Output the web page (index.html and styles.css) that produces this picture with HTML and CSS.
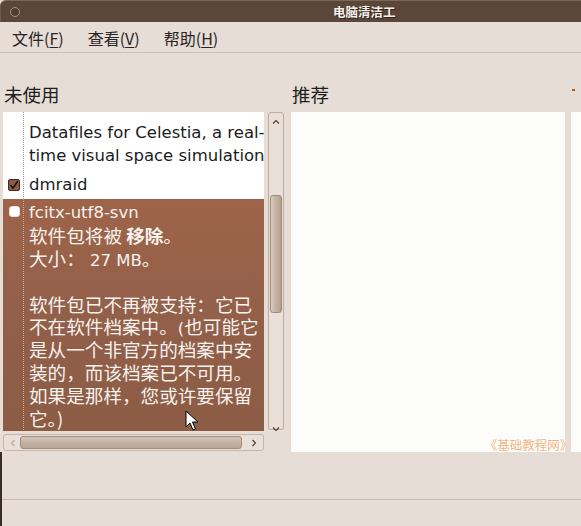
FILE: index.html
```html
<!DOCTYPE html>
<html>
<head>
<meta charset="utf-8">
<link rel="stylesheet" href="styles.css">
</head>
<body>
<div class="window">
  <div class="titlebar">
    <span class="win-btn"></span>
    <span class="title">电脑清洁工</span>
  </div>
  <div class="menubar">
    <span class="menu">文件(<u>F</u>)</span>
    <span class="menu">查看(<u>V</u>)</span>
    <span class="menu">帮助(<u>H</u>)</span>
  </div>
  <div class="main">
    <div class="col col-left">
      <div class="label">未使用</div>
      <div class="listwrap">
        <div class="list">
          <div class="row">
            <span class="cb-slot"></span>
            <div class="row-text">
              <div class="ln">Datafiles for Celestia, a real-</div>
              <div class="ln">time visual space simulation</div>
            </div>
          </div>
          <div class="row">
            <span class="cb-slot"><span class="cb cb-checked"><svg width="10" height="10" viewBox="0 0 10 10"><path d="M1.5 5.2 L4 8 L8.8 1.2" fill="none" stroke="#111" stroke-width="1.6"/></svg></span></span>
            <div class="row-text"><div class="ln">dmraid</div></div>
          </div>
          <div class="row row-selected">
            <span class="cb-slot"><span class="cb cb-empty"></span></span>
            <div class="row-text">
              <div class="ln">fcitx-utf8-svn</div>
              <div class="ln"><span class="cjk">软件包将被 <b>移除</b>。</span></div>
              <div class="ln"><span class="cjk">大小：</span> 27 MB<span class="cjk">。</span></div>
              <div class="ln"></div>
              <div class="ln"><span class="cjk">软件包已不再被支持：它已</span></div>
              <div class="ln"><span class="cjk">不在软件档案中。</span>(<span class="cjk">也可能它</span></div>
              <div class="ln"><span class="cjk">是从一个非官方的档案中安</span></div>
              <div class="ln"><span class="cjk">装的，而该档案已不可用。</span></div>
              <div class="ln"><span class="cjk">如果是那样，您或许要保留</span></div>
              <div class="ln"><span class="cjk">它。)</span></div>
            </div>
          </div>
          <svg class="cursor" width="14" height="22" viewBox="0 0 14 22"><path d="M1 1 L1 17 L5 13 L8 20 L10.5 19 L7.5 12 L13 12 Z" fill="#fff" stroke="#000" stroke-width="1"/></svg>
        </div>
        <div class="vscroll">
          <svg class="arrow" width="8" height="6" viewBox="0 0 8 6"><path d="M1 4.5 L4 1.5 L7 4.5" fill="none" stroke="#4a3a30" stroke-width="1.1"/></svg>
          <div class="vtrack"><div class="vthumb"></div></div>
          <svg class="arrow" width="8" height="6" viewBox="0 0 8 6"><path d="M1 1.5 L4 4.5 L7 1.5" fill="none" stroke="#4a3a30" stroke-width="1.1"/></svg>
        </div>
      </div>
      <div class="hscroll">
        <svg class="harrow dim" width="6" height="8" viewBox="0 0 6 8"><path d="M4.5 1 L1.5 4 L4.5 7" fill="none" stroke="#b9aba0" stroke-width="1.1"/></svg>
        <div class="hthumb"></div>
        <svg class="harrow" width="6" height="8" viewBox="0 0 6 8"><path d="M1.5 1 L4.5 4 L1.5 7" fill="none" stroke="#4a3a30" stroke-width="1.1"/></svg>
      </div>
    </div>
    <div class="col col-right">
      <div class="label">推荐</div>
      <div class="pane">
        <span class="watermark">《基础教程网》</span>
      </div>
    </div>
    <div class="col col-extra">
      <div class="label"><span class="mark"></span></div>
      <div class="pane"></div>
    </div>
  </div>
  <div class="footer">
    <div class="status"></div>
  </div>
</div>
</body>
</html>
```
FILE: styles.css
```css
* { box-sizing: border-box; }
html, body {
  margin: 0;
  padding: 0;
  width: 581px;
  height: 526px;
  overflow: hidden;
  background: #e5ddd6;
}
.window {
  width: 581px;
  height: 526px;
  display: flex;
  flex-direction: column;
  font-family: "DejaVu Sans", "Noto Sans CJK SC", sans-serif;
  color: #1c1c1c;
  background: #e5ddd6;
}
.titlebar {
  height: 22px;
  flex: none;
  background: #5b4739;
  border-top-left-radius: 6px;
  border-top: 1px solid #7b6657;
  border-left: 1px solid #6e5a4c;
  display: flex;
  align-items: center;
}
.win-btn {
  width: 10px;
  height: 10px;
  border-radius: 50%;
  border: 1.5px solid #a1948a;
  background: #4f3d31;
  margin-left: 9px;
  margin-top: 1px;
}
.title {
  margin-left: 313px;
  font-family: "Noto Sans CJK SC", sans-serif;
  font-weight: bold;
  font-size: 12.5px;
  color: #f4f0ec;
  text-shadow: 1px 1px 0 #2e221a;
}
.menubar {
  height: 31px;
  flex: none;
  display: flex;
  align-items: center;
  padding-left: 12px;
  padding-top: 2px;
  border-bottom: 1px solid #cbbfb5;
  font-family: "Noto Sans CJK SC", sans-serif;
  font-size: 16px;
  color: #2a2522;
}
.menu { margin-right: 24px; }
.menu u { text-decoration-thickness: 1px; text-underline-offset: 2px; }
.main {
  height: 399px;
  flex: none;
  display: flex;
  padding-left: 3px;
}
.col { display: flex; flex-direction: column; }
.label {
  height: 59px;
  flex: none;
  padding-top: 31px;
  padding-left: 1px;
  font-family: "Noto Sans CJK SC", sans-serif;
  font-size: 18.5px;
  line-height: 20px;
  color: #1e1e1e;
}
.col-left { width: 281px; }
.listwrap {
  display: flex;
  height: 319px;
  gap: 4px;
}
.list {
  width: 261px;
  height: 319px;
  background: #ffffff;
  overflow: hidden;
  padding-top: 7px;
  position: relative;
  background-image: linear-gradient(#9a9a9a 50%, transparent 50%);
  background-size: 1px 2px;
  background-repeat: repeat-y;
  background-position: 20px 0;
}
.row {
  display: flex;
  padding: 3px 0 3px 0;
  font-size: 16.5px;
}
.cb-slot {
  width: 26px;
  flex: none;
  position: relative;
}
.cb {
  position: absolute;
  left: 5px;
  top: 5px;
  width: 12px;
  height: 12px;
  border-radius: 2px;
}
.cb-checked {
  background: #8f5b42;
  border: 1px solid #3f2a1e;
  display: flex;
  align-items: center;
  justify-content: center;
}
.cb-empty {
  left: 6px;
  top: 4px;
  width: 11px;
  height: 11px;
  background: #ffffff;
  border: 1px solid #e9e1db;
  border-radius: 3px;
}
.row-text {
  white-space: nowrap;
  font-family: "DejaVu Sans", "Noto Sans CJK SC", sans-serif;
}
.ln {
  height: 22.8px;
  line-height: 22.8px;
}
.cjk {
  font-family: "Noto Sans CJK SC", sans-serif;
  font-size: 18.6px;
  line-height: 20px;
}
.row-selected {
  color: #f7f2ee;
  flex: 1;
  background-image:
    linear-gradient(#c9a796 50%, transparent 50%),
    linear-gradient(#9e6449, #93604a 45%, #8c5c45);
  background-size: 1px 2px, 100% 100%;
  background-repeat: repeat-y, no-repeat;
  background-position: 20px 0, 0 0;
}
.row-selected b { font-weight: bold; }
.cursor {
  position: absolute;
  left: 182px;
  top: 298px;
}
.vscroll {
  width: 16px;
  height: 318px;
  border: 1px solid #bfac9d;
  border-radius: 3px;
  background: #e8e0d9;
  display: flex;
  flex-direction: column;
  align-items: center;
  padding: 6px 0;
}
.arrow { flex: none; }
.vtrack {
  flex: 1;
  width: 100%;
  padding: 70px 1px 113px 1px;
}
.vthumb {
  height: 118px;
  border: 1px solid #a28b7a;
  border-radius: 3px;
  background: linear-gradient(90deg, #d8ccc1, #c7b6a8 40%, #b49f8f);
}
.hscroll {
  margin-top: 3px;
  width: 261px;
  height: 17px;
  border: 1px solid #c6b5a7;
  border-radius: 3px;
  background: #e8e0d9;
  display: flex;
  align-items: center;
  padding: 0 6px 0 6px;
}
.harrow { flex: none; }
.hthumb {
  width: 223px;
  height: 13px;
  margin: 0 9px 0 4px;
  border: 1px solid #a28b7a;
  border-radius: 3px;
  background: linear-gradient(#d4c6bb, #c3b3a6 50%, #b8a595);
}
.col-right {
  width: 282px;
  margin-left: 7px;
}
.pane {
  flex: 1;
  background: #fcfdfa;
  display: flex;
  flex-direction: column;
  justify-content: flex-end;
  align-items: flex-end;
}
.watermark {
  font-family: "Noto Sans CJK SC", sans-serif;
  font-size: 12.5px;
  line-height: 14px;
  color: #efb786;
  margin-right: -7px;
}
.col-extra {
  width: 10px;
  margin-left: 6px;
}
.mark {
  display: block;
  width: 3px;
  height: 2px;
  margin-top: 5px;
  background: #b85a10;
}
.footer {
  flex: 1;
  border-left: 2px solid #3a2c22;
  padding-top: 47px;
}
.status {
  border-top: 1px solid #c7b9ae;
}
```
